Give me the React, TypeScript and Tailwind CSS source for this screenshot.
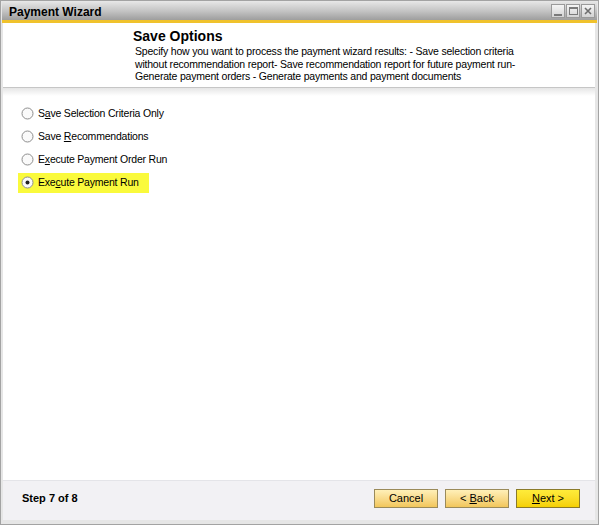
import { ReactNode } from 'react'

const font = { fontFamily: '"Liberation Sans", Arial, sans-serif' }

interface OptionRow {
  pre: string
  key: string
  post: string
  checked?: boolean
}

const options: OptionRow[] = [
  { pre: 'S', key: 'a', post: 've Selection Criteria Only' },
  { pre: 'Save ', key: 'R', post: 'ecommendations' },
  { pre: 'E', key: 'x', post: 'ecute Payment Order Run' },
  { pre: 'Exe', key: 'c', post: 'ute Payment Run', checked: true },
]

function Radio({ checked }: { checked?: boolean }) {
  return (
    <svg width="13" height="13" viewBox="0 0 13 13" className="shrink-0">
      <circle cx="6.5" cy="6.5" r="5.5" fill="#fafafa" stroke="#8e8e8e" strokeWidth="1" />
      {checked && <circle cx="6.5" cy="6.5" r="2" fill="#222" />}
    </svg>
  )
}

function WinButton({ children }: { children: ReactNode }) {
  return (
    <div className="w-[14px] h-[14px] border border-[#9a9a9a] bg-gradient-to-b from-[#f4f4f4] to-[#d4d4d4] flex items-center justify-center">
      {children}
    </div>
  )
}

function WizardButton({ children, primary }: { children: ReactNode; primary?: boolean }) {
  return (
    <button
      className={`w-[64px] h-[19px] border text-[11px] leading-none text-black flex items-center justify-center ${
        primary
          ? 'border-[#8a7a2a] bg-gradient-to-b from-[#ffec3a] to-[#f5d000]'
          : 'border-[#9a8a5a] bg-gradient-to-b from-[#fff0b8] to-[#f2c65a]'
      }`}
    >
      {children}
    </button>
  )
}

export default function App() {
  return (
    <div className="w-[599px] h-[525px] bg-[#e6e6e6] border border-[#a3a3a3] p-[1px] pb-[4px] flex flex-col" style={font}>
      {/* Title bar */}
      <div className="h-[18px] flex items-center justify-between pl-[7px] pr-[2px] bg-gradient-to-b from-[#e4e4e4] via-[#c4c4c4] to-[#9e9e9e]">
        <span className="text-[12px] font-bold text-black leading-none mt-[2px]">Payment Wizard</span>
        <div className="flex gap-[1px]">
          <WinButton>
            <div className="w-[8px] h-[2px] bg-[#7a7a7a] mt-[7px]" />
          </WinButton>
          <WinButton>
            <div className="w-[9px] h-[8px] border border-[#7a7a7a] border-t-2" />
          </WinButton>
          <WinButton>
            <svg width="8" height="8" viewBox="0 0 8 8">
              <path d="M1 1 L7 7 M7 1 L1 7" stroke="#6e6e6e" strokeWidth="1.6" />
            </svg>
          </WinButton>
        </div>
      </div>
      <div className="h-[3px] bg-[#f0c22c]" />

      <div className="flex-1 bg-white mr-[2px] ml-[1px] flex flex-col">
        {/* Header */}
        <div className="h-[64px] pl-[130px] pt-[5px]">
          <div className="text-[14px] font-bold text-black leading-[17px]">Save Options</div>
          <div className="text-[10.5px] tracking-[-0.2px] text-black leading-[12.5px] pl-[2px] whitespace-nowrap">
            <div>Specify how you want to process the payment wizard results: - Save selection criteria</div>
            <div>without recommendation report- Save recommendation report for future payment run-</div>
            <div>Generate payment orders - Generate payments and payment documents</div>
          </div>
        </div>
        <div className="h-[1px] bg-[#c6c6c6]" />
        <div className="h-[8px] bg-gradient-to-b from-[#e6e6e6] to-white" />

        {/* Options */}
        <div className="flex flex-col pt-[6px] pl-[15px]">
          {options.map((o, i) => (
            <div key={i} className="h-[23px] flex items-center">
              <div
                className={`h-[20px] flex items-center gap-[4px] pl-[3px] pr-[10px] ${
                  o.checked ? 'bg-[#fafa3c]' : ''
                }`}
              >
                <Radio checked={o.checked} />
                <span className="text-[10.5px] tracking-[-0.2px] text-black leading-none">
                  {o.pre}
                  <span className="underline">{o.key}</span>
                  {o.post}
                </span>
              </div>
            </div>
          ))}
        </div>

        <div className="flex-1" />

        {/* Footer */}
        <div className="h-[40px] bg-[#f2f1f4] border-t border-[#e4e4e8] flex items-center justify-between pl-[19px] pr-[15px] pb-[4px]">
          <span className="text-[11px] font-bold text-black">Step 7 of 8</span>
          <div className="flex gap-[7px]">
            <WizardButton>Cancel</WizardButton>
            <WizardButton>
              &lt; <span className="underline ml-[3px]">B</span>ack
            </WizardButton>
            <WizardButton primary>
              <span className="underline">N</span>ext &gt;
            </WizardButton>
          </div>
        </div>
      </div>
    </div>
  )
}
